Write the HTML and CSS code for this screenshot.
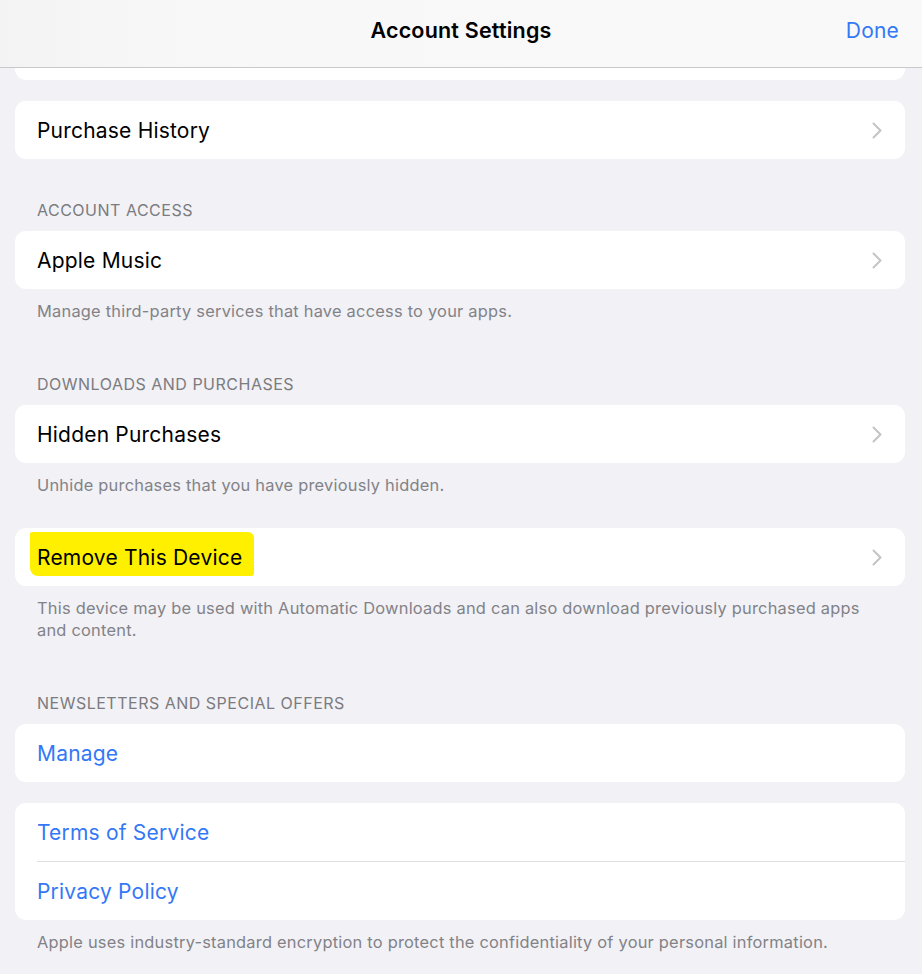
FILE: index.html
```html
<!DOCTYPE html>
<html lang="en">
<head>
<meta charset="utf-8">
<title>Account Settings</title>
<link rel="stylesheet" href="styles.css">
</head>
<body>
<header class="navbar">
  <div class="nav-side"></div>
  <h1 class="nav-title">Account Settings</h1>
  <div class="nav-side nav-right"><span class="nav-done">Done</span></div>
</header>
<main class="content">
  <div class="card card-cut"></div>

  <div class="card">
    <div class="row"><span class="row-label">Purchase History</span><svg class="chev" viewBox="0 0 10 17" width="10" height="17"><path d="M1.5 1.5 L8.5 8.5 L1.5 15.5"/></svg></div>
  </div>

  <div class="section-header">ACCOUNT ACCESS</div>
  <div class="card">
    <div class="row"><span class="row-label">Apple Music</span><svg class="chev" viewBox="0 0 10 17" width="10" height="17"><path d="M1.5 1.5 L8.5 8.5 L1.5 15.5"/></svg></div>
  </div>
  <div class="section-footer">Manage third-party services that have access to your apps.</div>

  <div class="section-header">DOWNLOADS AND PURCHASES</div>
  <div class="card">
    <div class="row"><span class="row-label">Hidden Purchases</span><svg class="chev" viewBox="0 0 10 17" width="10" height="17"><path d="M1.5 1.5 L8.5 8.5 L1.5 15.5"/></svg></div>
  </div>
  <div class="section-footer">Unhide purchases that you have previously hidden.</div>

  <div class="card card-gap">
    <div class="row"><span class="row-label highlight">Remove This Device</span><svg class="chev" viewBox="0 0 10 17" width="10" height="17"><path d="M1.5 1.5 L8.5 8.5 L1.5 15.5"/></svg></div>
  </div>
  <div class="section-footer">This device may be used with Automatic Downloads and can also download previously purchased apps and content.</div>

  <div class="section-header">NEWSLETTERS AND SPECIAL OFFERS</div>
  <div class="card">
    <div class="row"><span class="row-label link">Manage</span></div>
  </div>

  <div class="card card-gap2">
    <div class="row"><span class="row-label link">Terms of Service</span></div>
    <div class="divider"></div>
    <div class="row"><span class="row-label link">Privacy Policy</span></div>
  </div>
  <div class="section-footer">Apple uses industry-standard encryption to protect the confidentiality of your personal information.</div>
</main>
</body>
</html>
```
FILE: styles.css
```css
* { box-sizing: border-box; }
html, body {
  margin: 0;
  padding: 0;
  background: #f1f1f6;
  font-family: Inter, "Noto Sans", "Liberation Sans", sans-serif;
  -webkit-font-smoothing: antialiased;
}
.navbar {
  height: 68px;
  display: flex;
  align-items: center;
  background: linear-gradient(90deg, #f3f3f3 0%, #f8f8f8 20%, #f9f9f9 100%);
  border-bottom: 1px solid #c9c9cc;
  padding: 0 23px 7px 23px;
}
.nav-side { flex: 1; display: flex; }
.nav-right { justify-content: flex-end; }
.nav-title {
  margin: 0;
  font-size: 21.5px;
  font-weight: 600;
  color: #000;
  letter-spacing: 0.2px;
}
.nav-done {
  font-size: 21px;
  color: #3478f6;
  letter-spacing: 0.2px;
}
.content {
  padding: 0 17px 40px 15px;
}
.card {
  background: #fff;
  border-radius: 11px;
}
.card-cut {
  height: 12px;
  border-radius: 0 0 11px 11px;
  margin-bottom: 21px;
}
.card-gap { margin-top: 32px; }
.card-gap2 { margin-top: 21px; }
.row {
  height: 58px;
  display: flex;
  align-items: center;
  justify-content: space-between;
  padding: 0 23px 0 22px;
}
.row-label {
  font-size: 21px;
  color: #000;
  letter-spacing: 0.2px;
}
.link { color: #3478f6; }
.chev {
  fill: none;
  stroke: #c4c4c7;
  stroke-width: 2;
  stroke-linecap: round;
  stroke-linejoin: round;
}
.highlight {
  background: #fff000;
  margin: -7px -14px 0 -7px;
  padding: 13px 12px 6px 7px;
  border-radius: 2px 6px 3px 8px;
}
.divider {
  height: 1px;
  background: #dedee2;
  margin-left: 22px;
}
.section-header {
  margin-top: 41px;
  margin-bottom: 11px;
  padding-left: 22px;
  font-size: 16px;
  line-height: 20px;
  color: #7b7b80;
  letter-spacing: 0.5px;
}
.section-footer {
  margin-top: 11px;
  padding: 0 22px;
  font-size: 16.4px;
  line-height: 22px;
  color: #828287;
  letter-spacing: 0.23px;
}
.section-footer + .section-header { margin-top: 52px; }
```
